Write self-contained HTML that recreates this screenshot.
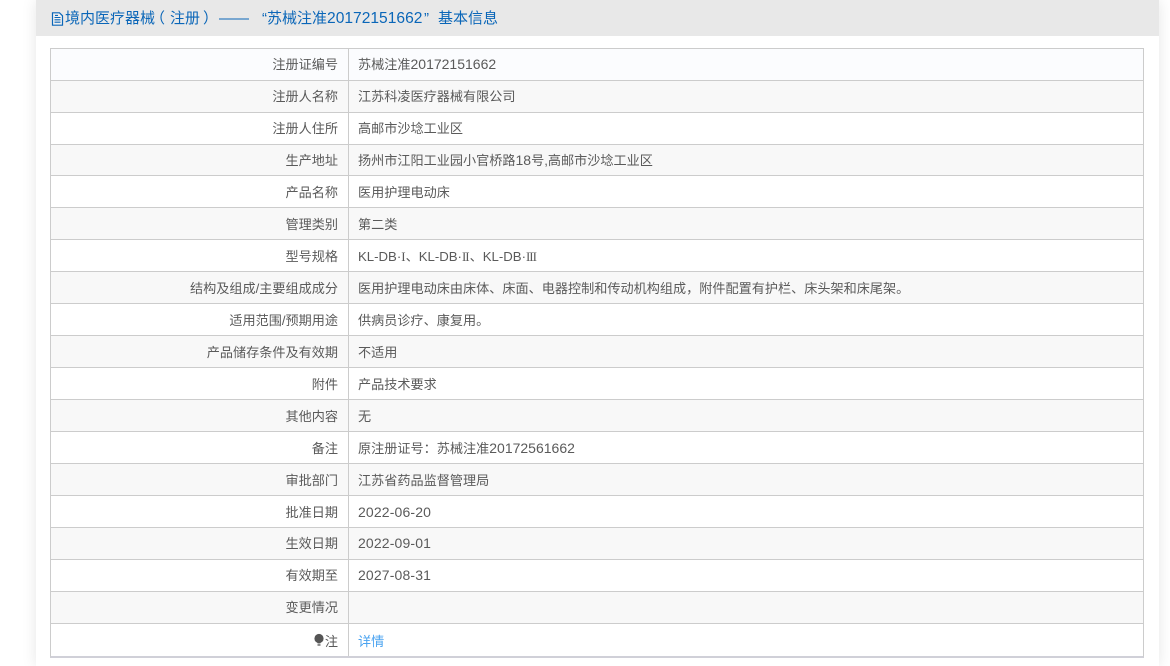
<!DOCTYPE html>
<html lang="zh">
<head>
<meta charset="utf-8">
<style>
html,body{margin:0;padding:0;background:#fff;width:1170px;height:666px;overflow:hidden}
body{position:relative;font-family:"Liberation Sans","Noto Sans CJK SC",sans-serif;font-size:13.13px;color:#5a5a5a}
#box{position:absolute;left:36px;top:0;width:1123px;height:666px;background:#fff;box-shadow:0 0 14px rgba(0,0,0,.1)}
#head{position:absolute;left:36px;top:0;width:1123px;height:36px;background:#e8e8e8}
.t{position:absolute;top:8px;line-height:22px;font-size:15px;color:#0a66b8;white-space:nowrap}
.t .n{font-size:15.6px}
#ic{position:absolute;left:51px;top:12px}
#tb{position:absolute;left:50px;top:48px;width:1094px;height:610px;box-sizing:border-box;border:1px solid #ccc;border-bottom:2px solid #d0d0d8}
.r{position:absolute;left:0;width:1092px;border-top:1px solid #ccc;box-sizing:border-box}
.r:first-child{border-top:0}
.o{background:#fbfcfe}.w{background:#fff}.e{background:#f8f8f8}
.l,.v{position:absolute;top:0;white-space:nowrap;height:100%;display:flex;align-items:center}
.l{right:805px;justify-content:flex-end}
.v{left:307px}
.up .l,.up .v{top:-1px}
.n{font-size:14px;white-space:pre}
.k{font-size:13.2px;white-space:pre}
.d{font-size:14px;letter-spacing:.15px}
.s{font-family:"Liberation Serif",serif;font-size:13px;letter-spacing:-1px;margin-right:1px}
#sep{position:absolute;left:297px;top:0;width:1px;height:607px;background:#ccc}
a{color:#4aa3f0;text-decoration:none}
</style>
</head>
<body>
<div id="box"></div>
<div id="head"></div>
<svg id="ic" width="13" height="14" viewBox="0 0 13 14"><path d="M1.5 .8H8.5L11.5 3.8V13.2H1.5Z" fill="#fff" fill-opacity=".35" stroke="#0a66b8" stroke-width="1.2"/><path d="M3.5 5.5H9.5M3.5 7.8H9.5M3.5 10.2H9.5M4 3.4H7" stroke="#0a66b8" stroke-width="1.1"/></svg>
<div class="t" style="left:65px">境内医疗器械</div>
<div class="t" style="left:150px">（</div>
<div class="t" style="left:170px">注册</div>
<div class="t" style="left:203px">）</div>
<div class="t" style="left:219px">——</div>
<div class="t" style="left:262px">“</div>
<div class="t" style="left:267px">苏械注准<span class="n">20172151662</span></div>
<div class="t" style="left:424px">”</div>
<div class="t" style="left:438px">基本信息</div>
<div id="tb">
<div class="r o up" style="top:0;height:31px"><div class="l">注册证编号</div><div class="v"><span>苏械注准<span class="n">20172151662</span></span></div></div>
<div class="r e up" style="top:31px;height:32px"><div class="l">注册人名称</div><div class="v">江苏科凌医疗器械有限公司</div></div>
<div class="r w up" style="top:63px;height:32px"><div class="l">注册人住所</div><div class="v">高邮市沙埝工业区</div></div>
<div class="r e up" style="top:95px;height:31px"><div class="l">生产地址</div><div class="v"><span>扬州市江阳工业园小官桥路<span class="n">18</span>号,高邮市沙埝工业区</span></div></div>
<div class="r w" style="top:126px;height:32px"><div class="l">产品名称</div><div class="v">医用护理电动床</div></div>
<div class="r e" style="top:158px;height:32px"><div class="l">管理类别</div><div class="v">第二类</div></div>
<div class="r w" style="top:190px;height:32px"><div class="l">型号规格</div><div class="v"><span><span class="k">KL-DB·</span><span class="s">I</span>、<span class="k">KL-DB·</span><span class="s">II</span>、<span class="k">KL-DB·</span><span class="s">III</span></span></div></div>
<div class="r e" style="top:222px;height:32px"><div class="l">结构及组成/主要组成成分</div><div class="v">医用护理电动床由床体、床面、电器控制和传动机构组成，附件配置有护栏、床头架和床尾架。</div></div>
<div class="r w" style="top:254px;height:32px"><div class="l">适用范围/预期用途</div><div class="v">供病员诊疗、康复用。</div></div>
<div class="r e" style="top:286px;height:32px"><div class="l">产品储存条件及有效期</div><div class="v">不适用</div></div>
<div class="r w" style="top:318px;height:32px"><div class="l">附件</div><div class="v">产品技术要求</div></div>
<div class="r e" style="top:350px;height:32px"><div class="l">其他内容</div><div class="v">无</div></div>
<div class="r w" style="top:382px;height:32px"><div class="l">备注</div><div class="v"><span>原注册证号：苏械注准<span class="n">20172561662</span></span></div></div>
<div class="r e" style="top:414px;height:32px"><div class="l">审批部门</div><div class="v">江苏省药品监督管理局</div></div>
<div class="r w" style="top:446px;height:32px"><div class="l">批准日期</div><div class="v"><span class="d">2022-06-20</span></div></div>
<div class="r e up" style="top:478px;height:32px"><div class="l">生效日期</div><div class="v"><span class="d">2022-09-01</span></div></div>
<div class="r w up" style="top:510px;height:32px"><div class="l">有效期至</div><div class="v"><span class="d">2027-08-31</span></div></div>
<div class="r e up" style="top:542px;height:32px"><div class="l">变更情况</div></div>
<div class="r w" style="top:574px;height:33px"><div class="l"><svg width="12" height="14" viewBox="0 0 12 14"><circle cx="6" cy="5.5" r="4.6" fill="#555"/><rect x="4.5" y="10.5" width="3" height="2.4" fill="#888"/></svg>注</div><div class="v"><a>详情</a></div></div>
<div id="sep"></div>
</div>
</body>
</html>
